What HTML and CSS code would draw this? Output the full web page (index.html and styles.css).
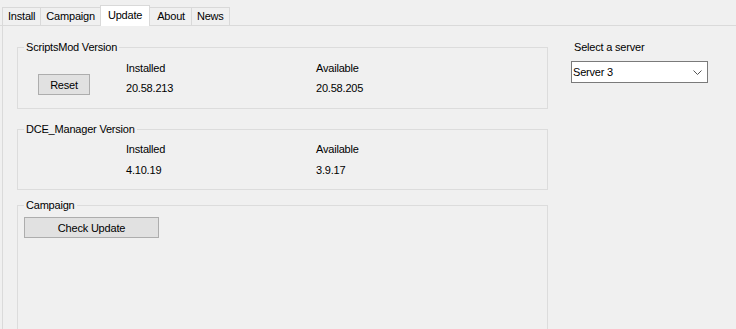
FILE: index.html
```html
<!DOCTYPE html>
<html lang="en">
<head>
    <meta charset="UTF-8">
    <meta name="viewport" content="width=device-width, initial-scale=1.0">
    <title>Update</title>
    <link rel="stylesheet" href="styles.css">
</head>
<body>
    <div class="tabs">
        <div class="tab">Install</div>
        <div class="tab">Campaign</div>
        <div class="tab active">Update</div>
        <div class="tab about">About</div>
        <div class="tab">News</div>
    </div>
    <div class="page">
        <div class="left">
            <fieldset class="group group-scripts">
                <legend>ScriptsMod Version</legend>
                <div class="versions">
                    <div class="ver-action">
                        <button class="btn btn-reset">Reset</button>
                    </div>
                    <div class="ver-col">
                        <div>Installed</div>
                        <div>20.58.213</div>
                    </div>
                    <div class="ver-col">
                        <div>Available</div>
                        <div>20.58.205</div>
                    </div>
                </div>
            </fieldset>

            <fieldset class="group group-manager">
                <legend>DCE_Manager Version</legend>
                <div class="versions">
                    <div class="ver-action"></div>
                    <div class="ver-col">
                        <div>Installed</div>
                        <div>4.10.19</div>
                    </div>
                    <div class="ver-col">
                        <div>Available</div>
                        <div>3.9.17</div>
                    </div>
                </div>
            </fieldset>

            <fieldset class="group group-campaign">
                <legend>Campaign</legend>
                <button class="btn btn-check">Check Update</button>
            </fieldset>
        </div>

        <div class="right">
            <div class="server-label">Select a server</div>
            <div class="select">
                <span>Server 3</span>
                <svg class="chevron" width="9" height="5" viewBox="0 0 9 5">
                    <path d="M0.5 0.5 L4.5 4.5 L8.5 0.5" fill="none" stroke="#555" stroke-width="1"/>
                </svg>
            </div>
        </div>
    </div>
</body>
</html>
```

FILE: styles.css
```css
body {
    margin: 0;
    background: #f0f0f0;
    font-family: 'Segoe UI', 'Liberation Sans', sans-serif;
    font-size: 11px;
    line-height: 15px;
    letter-spacing: -0.2px;
    color: #000;
    height: 100vh;
    overflow: hidden;
}

/* tab strip */
.tabs {
    display: flex;
    align-items: flex-end;
    height: 25px;
    padding-left: 2px;
    border-bottom: 1px solid #dadada;
}

.tab {
    height: 17px;
    padding: 0 5px;
    margin-right: -1px;
    border: 1px solid #d9d9d9;
    border-bottom: none;
    background: #f0f0f0;
    line-height: 17px;
}

.tab.active {
    position: relative;
    z-index: 1;
    height: 20px;
    margin-bottom: -1px;
    padding: 0 7px;
    background: #fff;
    line-height: 18px;
}

.tab.about {
    padding: 0 6px 0 7px;
}

/* page */
.page {
    display: flex;
    gap: 23px;
    margin-left: 2px;
    padding: 14px 0 0 14px;
    border-left: 1px solid #dadada;
    height: 100%;
}

.left {
    width: 531px;
}

.group {
    margin: 0;
    padding: 0;
    min-width: 0;
    border: 1px solid #dcdcdc;
}

.group legend {
    margin-left: 6px;
    padding: 0 2px;
    line-height: 15px;
}

.versions {
    display: flex;
    padding-left: 20px;
}

.ver-action {
    width: 88px;
    display: flex;
    align-items: flex-end;
}

.ver-col {
    width: 190px;
    display: flex;
    flex-direction: column;
}

.group-scripts .versions {
    padding-top: 6px;
    padding-bottom: 12px;
}

.group-scripts .ver-col {
    gap: 5px;
}

.group-manager {
    margin-top: 13px;
}

.group-manager .versions {
    padding-top: 5px;
    padding-bottom: 11px;
}

.group-manager .ver-col {
    gap: 6px;
}

.group-campaign {
    margin-top: 8px;
    height: 200px;
}

.btn {
    display: block;
    height: 21px;
    padding: 0;
    border: 1px solid #adadad;
    background: #e1e1e1;
    font-family: inherit;
    font-size: 11px;
    letter-spacing: inherit;
    color: #000;
}

.btn-reset {
    width: 52px;
    margin-bottom: 1px;
}

.btn-check {
    width: 135px;
    margin: 4px 0 0 6px;
}

/* server select */
.server-label {
    margin-left: 3px;
}

.select {
    display: flex;
    align-items: center;
    justify-content: space-between;
    box-sizing: border-box;
    width: 137px;
    height: 22px;
    margin-top: 6px;
    padding: 0 5px 0 1px;
    border: 1px solid #7a7a7a;
    background: #fff;
}
```
